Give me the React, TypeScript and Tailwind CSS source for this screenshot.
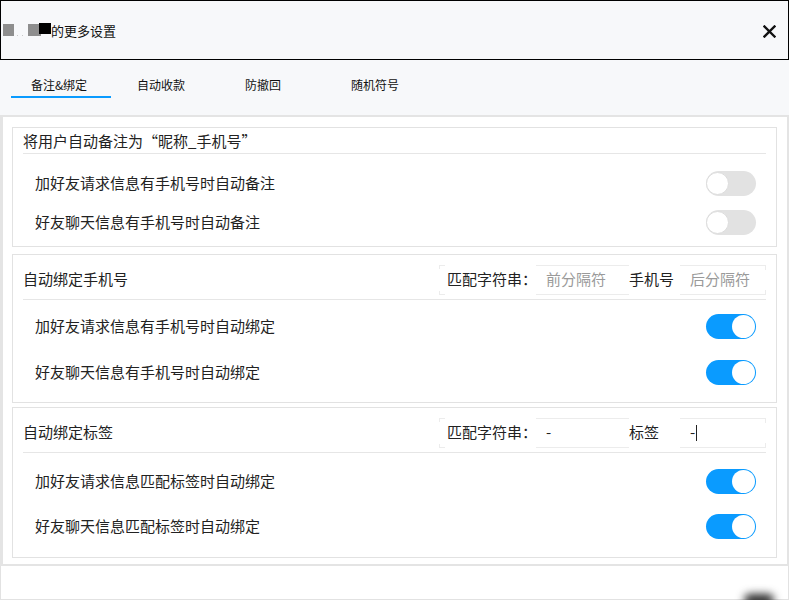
import type { ReactNode } from 'react';

const FONT = "font-['Noto_Sans_CJK_SC','Noto_Sans',sans-serif]";

function Toggle({ on }: { on: boolean }) {
  return (
    <div
      className={`relative h-[25px] w-[50px] rounded-full ${on ? 'bg-[#0a9bff]' : 'bg-[#e2e2e2]'}`}
    >
      <div
        className={`absolute top-[1px] h-[23px] w-[23px] rounded-full bg-white ${
          on ? 'right-[1px]' : 'left-0 border border-[#dcdcdc]'
        }`}
      />
    </div>
  );
}

function Row({ label, on }: { label: string; on: boolean }) {
  return (
    <div className="flex items-center justify-between pl-[22px] pr-[20px]" style={{ height: 'var(--row-h)' }}>
      <span className="text-[15px] text-[#222]">{label}</span>
      <Toggle on={on} />
    </div>
  );
}

function MatchHeader({
  title,
  secondLabel,
  first,
  second,
  placeholder,
}: {
  title: string;
  secondLabel: string;
  first: ReactNode;
  second: ReactNode;
  placeholder: boolean;
}) {
  const valueColor = placeholder ? 'text-[#9a9a9a]' : 'text-[#222]';
  return (
    <div className="mx-[10px] flex h-[45px] items-center justify-between border-b border-[#e6e6e6] pt-[5px]">
      <span className="text-[15px] text-[#222]">{title}</span>
      <div className="flex h-[30px] shrink-0 items-stretch whitespace-nowrap text-[15px]">
        <div className="relative flex w-[97px] shrink-0 items-center pl-[8px] text-[#222]">
          <span className="absolute left-0 top-0 h-[4px] w-[6px] border-l border-t border-[#ececec]" />
          <span className="absolute bottom-0 left-0 h-[4px] w-[6px] border-b border-l border-[#ececec]" />
          匹配字符串<span className="w-[11px]">：</span>
        </div>
        <div className={`flex w-[93px] shrink-0 items-center border-y border-[#ececec] pl-[10px] ${valueColor}`}>
          {first}
        </div>
        <div className="flex w-[51px] shrink-0 items-center text-[#222]">{secondLabel}</div>
        <div
          className={`relative flex w-[86px] shrink-0 items-center border-y border-[#ececec] pl-[10px] ${valueColor}`}
        >
          <span className="absolute right-0 top-0 h-[4px] w-px bg-[#ececec]" />
          <span className="absolute bottom-0 right-0 h-[4px] w-px bg-[#ececec]" />
          {second}
        </div>
      </div>
    </div>
  );
}

const tabs = [
  { label: '备注&绑定', width: 'w-[100px]', active: true },
  { label: '自动收款', width: 'w-[100px]', active: false },
  { label: '防撤回', width: 'w-[104px]', active: false },
  { label: '随机符号', width: 'w-[120px]', active: false },
];

export default function App() {
  return (
    <div className={`relative h-[600px] w-[789px] overflow-hidden bg-white ${FONT} flex flex-col`}>
      <header className="flex h-[60px] shrink-0 items-center justify-between border border-black bg-[#f7f8fa] pl-[2px] pr-[12px]">
        <div className="flex items-center">
          <div className="relative h-[14px] w-[48px]">
            <span className="absolute left-0 top-[1px] h-[12px] w-[11px] bg-[#8e8e8e]" />
            <span className="absolute left-[14px] top-[12px] h-px w-px bg-[#c8c8c8]" />
            <span className="absolute left-[19px] top-[12px] h-px w-px bg-[#c8c8c8]" />
            <span className="absolute left-[25px] top-[1px] h-[12px] w-[13px] bg-[#8e8e8e]" />
            <span className="absolute left-[36px] top-0 h-[11px] w-[12px] bg-black" />
          </div>
          <span className="text-[13px] leading-none text-[#111]">的更多设置</span>
        </div>
        <svg width="13" height="13" viewBox="0 0 13 13" className="mt-[2px]">
          <path d="M1.5 1.5 L11.5 11.5 M11.5 1.5 L1.5 11.5" stroke="#111" strokeWidth="2.4" strokeLinecap="square" />
        </svg>
      </header>

      <nav className="flex h-[55px] shrink-0 bg-[#f7f8fa] pl-[11px]">
        {tabs.map((tab) => (
          <div key={tab.label} className={`flex flex-col ${tab.width}`}>
            <span className="mt-[17px] block h-[16px] text-center text-[12px] leading-[16px] text-[#111]">
              <span className={tab.active ? 'mr-[4px]' : ''}>{tab.label}</span>
            </span>
            <div className={`mt-[3px] h-[2px] w-full ${tab.active ? 'bg-[#0a9bff]' : ''}`} />
          </div>
        ))}
      </nav>

      <section className="h-[451px] shrink-0 border-b-2 border-l-[3px] border-r-2 border-t-2 border-[#e4e4e4] pb-[8px] pl-[9px] pr-[10px] pt-[10px]">
        <div className="border border-[#e2e2e2] pb-[4px]" style={{ ['--row-h' as string]: '39px' }}>
          <div className="mx-[10px] h-[26px] border-b border-[#e6e6e6] text-[15px] leading-[25px] text-[#222]">
            将用户自动备注为“昵称_手机号”
          </div>
          <div className="pt-[10px]">
            <Row label="加好友请求信息有手机号时自动备注" on={false} />
            <Row label="好友聊天信息有手机号时自动备注" on={false} />
          </div>
        </div>

        <div className="mt-[7px] border border-[#e2e2e2] pb-[7px]" style={{ ['--row-h' as string]: '46px' }}>
          <MatchHeader
            title="自动绑定手机号"
            secondLabel="手机号"
            first="前分隔符"
            second="后分隔符"
            placeholder
          />
          <div className="pt-[3px]">
            <Row label="加好友请求信息有手机号时自动绑定" on />
            <Row label="好友聊天信息有手机号时自动绑定" on />
          </div>
        </div>

        <div className="mt-[4px] border border-[#e2e2e2] pb-[8px]" style={{ ['--row-h' as string]: '45px' }}>
          <MatchHeader
            title="自动绑定标签"
            secondLabel="标签"
            first="-"
            second={
              <span className="flex items-center">
                -<span className="ml-[1px] inline-block h-[16px] w-px bg-[#222]" />
              </span>
            }
            placeholder={false}
          />
          <div className="pt-[6px]">
            <Row label="加好友请求信息匹配标签时自动绑定" on />
            <Row label="好友聊天信息匹配标签时自动绑定" on />
          </div>
        </div>
      </section>

      <footer className="flex-1 border-x border-b border-[#e2e2e2] bg-white" />
      <div className="absolute left-[744px] top-[594px] h-[12px] w-[30px] rounded-full bg-[#2a2a2a] blur-[4px]" />
    </div>
  );
}
